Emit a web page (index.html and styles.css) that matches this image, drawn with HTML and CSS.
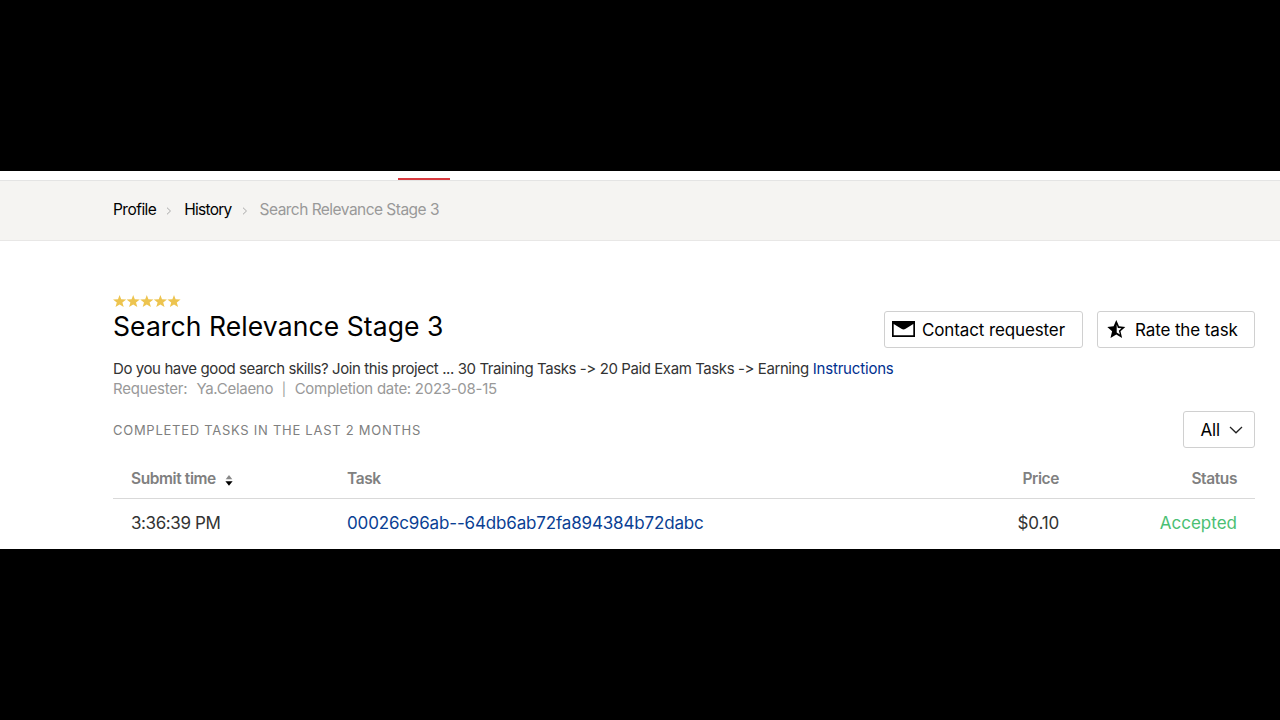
FILE: index.html
```html
<!DOCTYPE html>
<html lang="en">
<head>
    <title>Search Relevance Stage 3</title>
    <meta charset="utf-8" />
    <link rel="stylesheet" href="styles.css">
</head>
<body>
    <div class="page">
        <div class="topbar"><div class="active-tab"></div></div>
        <nav class="breadcrumbs">
            <a class="crumb">Profile</a>
            <svg class="crumb-arrow" width="6" height="8" viewBox="0 0 6 8"><path d="M1 .7 4.5 4 1 7.3"/></svg>
            <a class="crumb crumb-history">History</a>
            <svg class="crumb-arrow" width="6" height="8" viewBox="0 0 6 8"><path d="M1 .7 4.5 4 1 7.3"/></svg>
            <span class="crumb crumb-current">Search Relevance Stage 3</span>
        </nav>
        <main class="content">
            <header class="header">
                <div>
                    <svg class="stars" width="68" height="12" viewBox="0 0 68 12">
                        <defs><path id="star" d="M6.6 0 8.2 4.2 13.2 4.4 9.4 7.4 10.7 12 6.6 9.4 2.5 12 3.8 7.4 0 4.4 5 4.2z"/></defs>
                        <use href="#star"/>
                        <use href="#star" x="13.6"/>
                        <use href="#star" x="27.2"/>
                        <use href="#star" x="40.8"/>
                        <use href="#star" x="54.4"/>
                    </svg>
                    <h1>Search Relevance Stage 3</h1>
                </div>
                <div class="buttons">
                    <button class="btn contact">
                        <svg width="23" height="16" viewBox="0 0 23 16"><path d="M0 0h23v16H0z"/><path class="cut" d="M1.7 3 9.4 7.8Q11.5 9 13.6 7.8L21.3 3V14.2H1.7z"/></svg>
                        <span>Contact requester</span>
                    </button>
                    <button class="btn rate">
                        <svg width="19" height="19" viewBox="0 0 19 19"><path d="M9.3 0 12 6.3 18.3 7 13.5 11.3 15.1 18 9.3 14.6 3.5 18 5.1 11.3.3 7 6.6 6.3z"/><path class="cut" d="M9.7 4.4 10.9 8 14.5 8.3 11.8 10.7 12.9 14.6 9.7 12.6z"/></svg>
                        <span>Rate the task</span>
                    </button>
                </div>
            </header>
            <p class="description">Do you have good search skills? Join this project ... 30 Training Tasks -&gt; 20 Paid Exam Tasks -&gt; Earning <a>Instructions</a></p>
            <p class="meta"><span class="requester">Requester:</span><span class="name">Ya.Celaeno</span><span class="bar">|</span><span>Completion date: 2023-08-15</span></p>
            <div class="filter">
                <h2>COMPLETED TASKS IN THE LAST 2 MONTHS</h2>
                <button class="btn select">
                    <span>All</span>
                    <svg width="14" height="8" viewBox="0 0 14 8"><path d="M1 1 7 6.8 13 1"/></svg>
                </button>
            </div>
            <table>
                <thead>
                    <tr>
                        <th class="col-time">Submit time<svg class="sort" width="8" height="11" viewBox="0 0 8 11"><path class="up" d="M4 0 7.3 4.2H.7z"/><path d="M.4 6.2h7.2L4 10.7z"/></svg></th>
                        <th class="col-task">Task</th>
                        <th class="col-price">Price</th>
                        <th class="col-status">Status</th>
                    </tr>
                </thead>
                <tbody>
                    <tr>
                        <td class="time">3:36:39 PM</td>
                        <td><a class="task-link">00026c96ab--64db6ab72fa894384b72dabc</a></td>
                        <td class="col-price price">$0.10</td>
                        <td class="col-status accepted">Accepted</td>
                    </tr>
                </tbody>
            </table>
        </main>
    </div>
</body>
</html>
```
FILE: styles.css
```css
* {
    box-sizing: border-box;
}
body {
    margin: 0;
    padding-top: 171px;
    height: 720px;
    overflow: hidden;
    background-color: #000;
    color: #000;
    font-family: Inter, "Liberation Sans", sans-serif;
    font-feature-settings: "calt" 0;
}
.page {
    height: 378px;
    overflow: hidden;
    background-color: #fff;
}
.topbar {
    display: flex;
    align-items: flex-end;
    height: 10px;
    padding-left: 397.5px;
    border-bottom: 1px solid #e4e4e4;
}
.active-tab {
    width: 52.5px;
    height: 2.5px;
    background-color: #d93a3f;
}
.breadcrumbs {
    display: flex;
    align-items: center;
    height: 60px;
    padding: 0 0 3px 113px;
    background-color: #f5f4f2;
    border-bottom: 1px solid #e8e7e6;
    font-size: 15.5px;
    letter-spacing: -0.53px;
    white-space: nowrap;
}
.crumb-arrow {
    margin: 3px 12px 0 10px;
    fill: none;
    stroke: #aaa;
}
.crumb-history {
    letter-spacing: -0.75px;
}
.crumb-current {
    color: #999;
}
.content {
    padding: 54px 25px 0 113px;
}
.header {
    display: flex;
    justify-content: space-between;
}
.stars {
    display: block;
    fill: #edc44f;
}
h1 {
    margin: 3px 0 0;
    font-size: 26.5px;
    font-weight: 400;
    letter-spacing: 0.09px;
    line-height: 32px;
}
.buttons {
    display: flex;
    gap: 14px;
    padding-top: 16px;
}
.btn {
    display: flex;
    align-items: center;
    height: 37px;
    padding: 0 7px;
    background-color: #fff;
    border: 1px solid #d0d0d0;
    border-radius: 3px;
    color: #000;
    font-family: inherit;
    font-size: 17px;
    letter-spacing: -0.12px;
    white-space: nowrap;
}
.contact {
    width: 199px;
    gap: 7px;
}
.contact svg {
    margin-top: -1px;
}
.rate {
    width: 158px;
    gap: 9px;
    padding-left: 9px;
}
.cut {
    fill: #fff;
}
p {
    margin: 0;
    font-size: 15px;
    line-height: 20px;
    white-space: nowrap;
}
.description {
    margin-top: 11px;
    color: #333;
    letter-spacing: -0.41px;
}
.description a {
    color: #00308f;
    letter-spacing: -0.18px;
}
.meta {
    display: flex;
    color: #999;
    letter-spacing: -0.28px;
}
.requester {
    letter-spacing: -0.2px;
}
.name {
    margin-left: 9px;
}
.bar {
    margin: 0 9px 0 8.5px;
    font-size: 13px;
}
.filter {
    display: flex;
    align-items: center;
    justify-content: space-between;
    margin-top: 12px;
}
h2 {
    margin: 0;
    color: #808080;
    font-size: 13px;
    font-weight: 400;
    letter-spacing: 0.73px;
}
.select {
    width: 72px;
    gap: 9px;
    padding-left: 16.5px;
}
.select svg {
    fill: none;
    stroke: #222;
    stroke-width: 1.3;
}
table {
    width: 1142px;
    margin-top: 11px;
    border-collapse: collapse;
    table-layout: fixed;
}
th, td {
    padding: 0 18px;
    text-align: left;
    white-space: nowrap;
}
th {
    height: 39px;
    border-bottom: 1px solid #d9d9d9;
    color: #808080;
    font-size: 15.5px;
    font-weight: 600;
    letter-spacing: -0.4px;
}
td {
    height: 49px;
    padding-top: 1px;
    font-size: 17px;
    letter-spacing: -0.16px;
}
.col-time {
    width: 216px;
}
.col-task {
    width: 530px;
}
th.col-price, td.col-price {
    text-align: right;
}
th.col-status, td.col-status {
    width: 178px;
    text-align: right;
}
.sort {
    margin-left: 9px;
    vertical-align: -2px;
}
.up {
    fill: #888;
}
.time, .price {
    color: #333;
}
.time {
    letter-spacing: -0.4px;
}
.task-link {
    color: #0a3f94;
}
.accepted {
    color: #4bbf73;
    letter-spacing: 0;
}
```
